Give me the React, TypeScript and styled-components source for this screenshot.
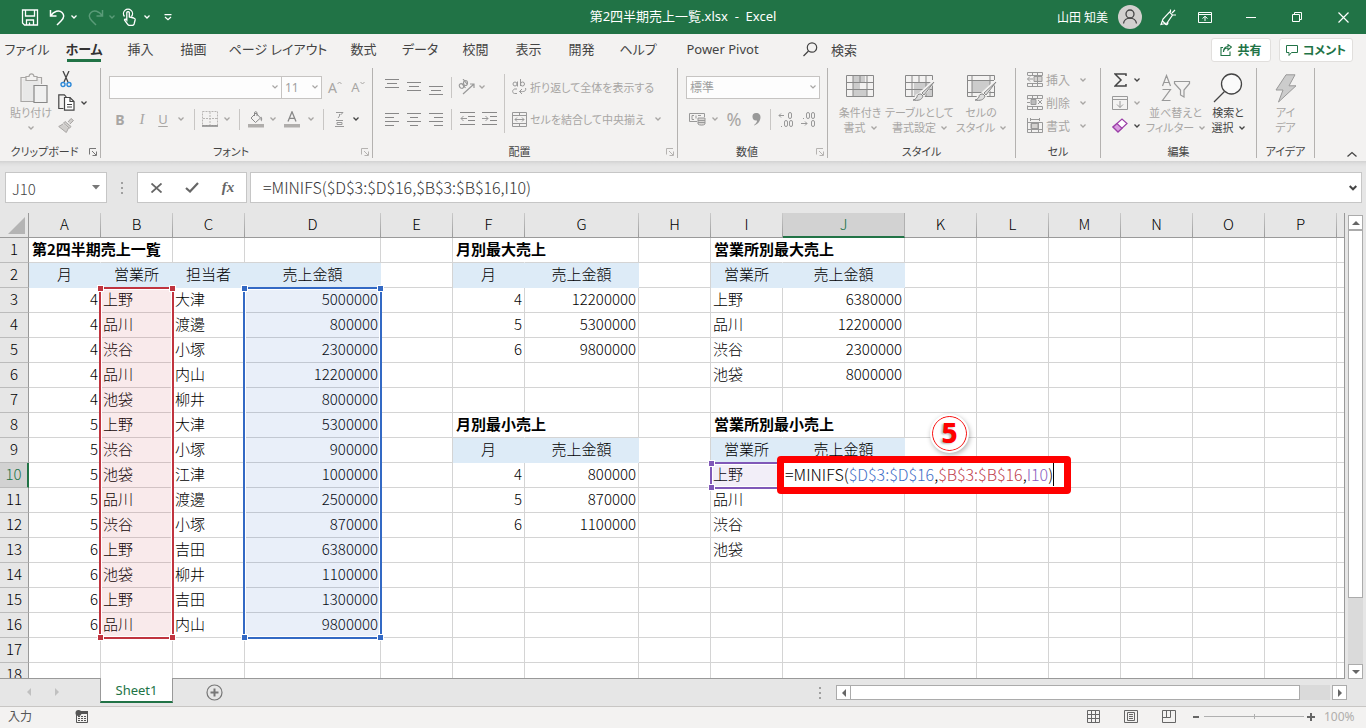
import React, { useState } from 'react';
import styled, { createGlobalStyle, css } from 'styled-components';

const UI = `'Noto Sans', 'Noto Sans CJK JP', sans-serif`;
const SHEET = `'Noto Sans CJK JP', sans-serif`;
const GREEN = '#217346';

const Global = createGlobalStyle`
  * { box-sizing: border-box; }
  body { margin: 0; background: #e6e6e6; font-family: ${UI}; font-size: 12px; color: #444; overflow: hidden; }
  button, input, select { font: inherit; color: inherit; margin: 0; }
  button { border: 0; padding: 0; background: none; font-feature-settings: 'palt'; }
`;

const Window = styled.div`
  display: flex;
  flex-direction: column;
  height: 100vh;
  font-feature-settings: 'palt';
`;

/* ---------- title bar ---------- */
const TitleBar = styled.header`
  display: grid;
  grid-template-columns: 1fr auto 1fr;
  align-items: center;
  flex: none;
  height: 34px;
  background: ${GREEN};
  color: #fff;
`;
const Quick = styled.div`
  display: flex;
  align-items: center;
  padding-left: 17px;
`;
const QuickPair = styled.div`
  display: flex;
  align-items: center;
  margin-right: 6px;
`;
const DocTitle = styled.div`
  font-size: 13px;
  line-height: 16px;
  padding-bottom: 2px;
  white-space: pre;
`;
const WindowTools = styled.div`
  display: flex;
  align-items: center;
  justify-content: flex-end;
`;
const UserName = styled.span`
  margin-right: 10px;
`;
const Account = styled.button`
  margin-right: 12px;
`;

/* ---------- generic controls ---------- */
const IconButton = styled.button<{ $w?: number; $h?: number; $c?: string }>`
  display: flex;
  align-items: center;
  justify-content: center;
  flex: none;
  width: ${p => p.$w ?? 22}px;
  height: ${p => p.$h ?? 24}px;
  color: ${p => p.$c ?? 'inherit'};
`;
const Svg = styled.svg.attrs(p => ({ fill: 'none', stroke: p.stroke ?? 'currentColor' }))`
  display: block;
  flex: none;
`;

const Chevron = () => (
  <Svg width="6" height="4" viewBox="0 0 6 4" strokeWidth="1.3">
    <path d="M.5.5 3 3 5.5.5" />
  </Svg>
);
const DropButton = ({ label, w, h, c }: { label: string; w: number; h?: number; c?: string }) => (
  <IconButton $w={w} $h={h} $c={c} aria-label={label}><Chevron /></IconButton>
);

/* ---------- tabs ---------- */
const TabRow = styled.nav`
  display: flex;
  align-items: center;
  flex: none;
  height: 32px;
  padding-right: 13px;
  background: #f3f2f1;
`;
const Tab = styled.button<{ $w: number; $active?: boolean }>`
  flex: none;
  width: ${p => p.$w}px;
  height: 32px;
  padding-bottom: 3px;
  font-size: 13px;
  white-space: nowrap;
  ${p => p.$active && css`
    font-weight: 700;
    color: #333;
    background: linear-gradient(${GREEN}, ${GREEN}) center 25px / 34px 3px no-repeat;
  `}
`;
const SearchButton = styled.button`
  display: flex;
  align-items: center;
  gap: 13px;
  margin-left: 26px;
  padding-bottom: 2px;
  font-size: 13px;
`;
const ShareArea = styled.div`
  display: flex;
  gap: 8px;
  margin-left: auto;
`;
const ShareButton = styled.button<{ $w: number }>`
  display: flex;
  align-items: center;
  justify-content: center;
  gap: 5px;
  width: ${p => p.$w}px;
  height: 24px;
  border: 1px solid #e1dfdd;
  border-radius: 3px;
  background: #fff;
  color: ${GREEN};
  font-size: 12px;
  font-weight: 700;
`;

/* ---------- ribbon ---------- */
const Ribbon = styled.section`
  display: flex;
  flex: none;
  height: 95px;
  padding-top: 2px;
  background: #f3f2f1;
`;
const Group = styled.section<{ $w: number }>`
  display: flex;
  flex-direction: column;
  flex: none;
  width: ${p => p.$w}px;
  height: 90px;
  border-right: 1px solid #b4b2b0;
  color: #a8a6a4;
`;
const GroupBody = styled.div<{ $pl?: number }>`
  display: flex;
  flex: 1;
  padding-left: ${p => p.$pl ?? 0}px;
`;
const GroupFoot = styled.footer`
  display: flex;
  align-items: center;
  height: 12px;
  color: #444;
  font-size: 11px;
  line-height: 14px;
  white-space: nowrap;
`;
const GroupName = styled.span`
  flex: 1;
  text-align: center;
`;
const LauncherButton = styled.button`
  margin-right: 3px;
`;
const Rows = styled.div`
  display: flex;
  flex-direction: column;
  gap: 8px;
  padding-top: 7px;
`;
const Row = styled.div`
  display: flex;
  align-items: center;
  height: 24px;
`;
const Tight = styled(Row)`
  height: 23px;
`;
const Split = styled.i<{ $m?: number }>`
  flex: none;
  width: 1px;
  height: 21px;
  margin: 0 ${p => p.$m ?? 5}px;
  background: #c8c6c4;
`;
const TallSplit = styled.i`
  flex: none;
  width: 1px;
  height: 59px;
  margin: 6px 7px 0 4px;
  background: #c8c6c4;
`;
const Combo = styled.select<{ $w: number }>`
  appearance: none;
  flex: none;
  width: ${p => p.$w}px;
  height: 23px;
  padding: 0 3px;
  border: 1px solid #c6c4c2;
  border-radius: 0;
  background: #fdfdfd url("data:image/svg+xml,%3Csvg xmlns='http://www.w3.org/2000/svg' width='6' height='4' fill='none' stroke='%23a8a6a4' stroke-width='1.2'%3E%3Cpath d='M.5.5 3 3 5.5.5'/%3E%3C/svg%3E") no-repeat right 3px center;
  color: #a0a0a0;
  font-size: 12px;
  & + & { margin-left: -1px; }
`;
const Glyph = styled.span<{ $size: number; $b?: boolean; $i?: boolean; $u?: boolean }>`
  font-size: ${p => p.$size}px;
  font-weight: ${p => (p.$b ? 700 : 400)};
  font-style: ${p => (p.$i ? 'italic' : 'normal')};
  text-decoration: ${p => (p.$u ? 'underline' : 'none')};
  text-underline-offset: 2px;
`;
const SerifItalic = styled(Glyph)`
  font-family: 'Liberation Serif', serif;
`;
const LabelButton = styled.button<{ $size?: number }>`
  display: flex;
  align-items: center;
  gap: 3px;
  height: 24px;
  font-size: ${p => p.$size ?? 12}px;
  white-space: nowrap;
  & > svg:nth-child(2) { margin-left: 7px; }
`;
const BigButton = styled.button<{ $w: number; $dark?: boolean }>`
  display: flex;
  flex-direction: column;
  align-items: center;
  justify-content: flex-start;
  flex: none;
  width: ${p => p.$w}px;
  padding-top: 3px;
  color: ${p => (p.$dark ? '#444' : '#a8a6a4')};
  font-size: 11px;
  line-height: 15px;
  white-space: nowrap;
`;
const BigIcon = styled.span`
  display: flex;
  align-items: center;
  justify-content: center;
  height: 34px;
`;
const BigLine = styled.span`
  display: flex;
  align-items: center;
  gap: 5px;
  height: 15px;
`;
const Collapse = styled.button`
  align-self: flex-end;
  margin: 0 9px 4px auto;
`;

const Launcher = ({ dim }: { dim?: boolean }) => (
  <LauncherButton aria-label="詳細設定">
    <Svg width="8" height="8" viewBox="0 0 8 8" stroke={dim ? '#b5b3b1' : '#777'}>
      <path d="M.5 6.5V.5H7M3 3l4 4M7.5 3.5v4h-4" />
    </Svg>
  </LauncherButton>
);

/* ---------- formula bar ---------- */
const FormulaBar = styled.section`
  display: flex;
  flex: none;
  height: 52px;
  padding: 11px 4px 10px 5px;
  background: linear-gradient(#d2d2d2, #e0e0e0 3px, #e6e6e6 6px);
`;
const NameBox = styled.div`
  display: flex;
  align-items: center;
  width: 102px;
  padding: 0 6px;
  border: 1px solid #c6c6c6;
  background: #fff;
  input { width: 80px; height: 24px; border: 0; padding: 2px 0 0; outline: 0; background: none; font-family: ${SHEET}; font-size: 15px; font-weight: 300; color: #444; }
`;
const Dots = styled.i`
  flex: none;
  width: 2px;
  height: 12px;
  background: repeating-linear-gradient(#a0a0a0 0 2px, transparent 2px 5px);
`;
const NameDots = styled(Dots)`
  align-self: center;
  margin: 0 14px;
`;
const ScrollDots = styled(Dots)`
  margin-right: 15px;
`;
const EditButtons = styled.div`
  display: flex;
  align-items: center;
  justify-content: space-around;
  width: 110px;
  border: 1px solid #c6c6c6;
  background: #fff;
  color: #666;
`;
const FormulaField = styled.div`
  display: flex;
  align-items: center;
  flex: 1;
  margin-left: 3px;
  padding: 0 4px 0 12px;
  border: 1px solid #c6c6c6;
  background: #fff;
  input { flex: 1; border: 0; padding: 0 0 2px; height: 26px; outline: 0; background: none; font-family: ${SHEET}; font-size: 16px; font-weight: 300; color: #333; }
`;

/* ---------- sheet ---------- */
const SheetArea = styled.main`
  display: flex;
  flex: 1;
  min-height: 0;
`;
const GridBox = styled.div`
  position: relative;
  flex: 1;
  min-width: 0;
  overflow: hidden;
  border-right: 1px solid #999;
  border-bottom: 1px solid #999;
  background: #fff;
`;
const Table = styled.table`
  width: 100%;
  table-layout: fixed;
  border-collapse: separate;
  border-spacing: 0;
  background: #fff;
  color: #000;
  font-family: ${SHEET};
  font-size: 15px;
  font-weight: 300;
  font-feature-settings: normal;
`;
const ColHead = styled.th<{ $on?: boolean }>`
  height: 25px;
  padding: 0 0 2px;
  border-right: 1px solid;
  border-bottom: 1px solid #999;
  border-image: linear-gradient(#ccc, #999) 1;
  background: #e6e6e6;
  font-weight: 300;
  line-height: 22px;
  &:last-child { border-right: 0; }
  ${p => p.$on && css`
    border-image: none;
    border-right-color: #b0b0b0;
    border-bottom: 2px solid ${GREEN};
    background: #d2d2d2;
    color: ${GREEN};
    line-height: 21px;
  `}
`;
const Corner = styled.th`
  padding: 0 3px 3px 0;
  border-right: 1px solid #999;
  border-bottom: 1px solid #999;
  background: #e6e6e6;
  vertical-align: bottom;
  svg { margin-left: auto; }
`;
const RowHead = styled.th<{ $on?: boolean }>`
  height: 25px;
  padding: 0 0 2px;
  border-right: 1px solid #999;
  border-bottom: 1px solid #bbb;
  background: #e6e6e6;
  font-weight: 300;
  line-height: 22px;
  ${p => p.$on && css`
    border-right: 2px solid ${GREEN};
    background: #d2d2d2;
    color: ${GREEN};
  `}
`;
type CellKind = 'text' | 'num' | 'head' | 'title' | 'empty';
const Cell = styled.td<{ $kind: CellKind; $open?: boolean }>`
  height: 25px;
  padding: 0 2px 2px;
  border-right: 1px solid ${p => (p.$open ? 'transparent' : '#d4d4d4')};
  border-bottom: 1px solid #d4d4d4;
  line-height: 22px;
  white-space: nowrap;
  overflow: visible;
  &:last-child { border-right: 0; }
  ${p => p.$kind === 'num' && css`text-align: right;`}
  ${p => p.$kind === 'title' && css`font-weight: 700; padding-left: 3px;`}
  ${p => p.$kind === 'head' && css`
    text-align: center;
    background: #ddebf7;
    border-color: #ddebf7;
  `}
`;
const Range = styled.div<{ $x: number; $y: number; $w: number; $h: number; $color: string; $fill: string }>`
  position: absolute;
  left: ${p => p.$x}px;
  top: ${p => p.$y}px;
  width: ${p => p.$w}px;
  height: ${p => p.$h}px;
  border: 2px solid ${p => p.$color};
  background: ${p => p.$fill};
  box-shadow: inset 0 0 0 1px #fff;
  i {
    position: absolute;
    width: 7px;
    height: 7px;
    border: 1px solid #fff;
    background: ${p => p.$color};
  }
  i:nth-child(1) { left: -4px; top: -4px; }
  i:nth-child(2) { right: -4px; top: -4px; }
  i:nth-child(3) { left: -4px; bottom: -4px; }
  i:nth-child(4) { right: -4px; bottom: -4px; }
`;
const Editor = styled.div`
  position: absolute;
  left: 777px;
  top: 243px;
  height: 38px;
  width: 294px;
  padding-left: 1px;
  border: 7px solid #f00;
  border-radius: 4px;
  background: #fff;
  color: #000;
  font-family: ${SHEET};
  font-size: 16px;
  font-weight: 300;
  font-feature-settings: normal;
  line-height: 22px;
  white-space: nowrap;
`;
const Ref = styled.span<{ $c: string }>`
  color: ${p => p.$c};
`;
const Caret = styled.i`
  display: inline-block;
  width: 1px;
  height: 23px;
  background: #000;
  vertical-align: top;
`;
const Step = styled.div`
  position: absolute;
  left: 932px;
  top: 203px;
  width: 35px;
  height: 35px;
  border: 1px solid #f00;
  border-radius: 50%;
  outline: 2px solid #fff;
  background: #fff;
  box-shadow: 1px 2px 5px 2px rgba(0, 0, 0, 0.3);
  color: #f00;
  font-size: 28px;
  font-weight: 800;
  line-height: 31px;
  text-align: center;
  text-shadow: -2px 1px 2px #bbb;
`;

/* ---------- scroll bars ---------- */
const VScroll = styled.div`
  display: flex;
  flex-direction: column;
  flex: none;
  width: 15px;
  margin: 2px 3px 0 3px;
  background: #dadada;
`;
const ScrollButton = styled.button`
  display: flex;
  align-items: center;
  justify-content: center;
  flex: none;
  width: 15px;
  height: 15px;
  border: 1px solid #ababab;
  background: #fff;
  color: #666;
`;
const VThumb = styled.div`
  flex: 368 0 0;
  border: 1px solid #ababab;
  background: #fff;
`;
const VRest = styled.div`
  flex: 66 0 0;
`;
const TabBar = styled.footer`
  display: flex;
  flex: none;
  height: 28px;
  padding-right: 19px;
  border-bottom: 1px solid #c8c6c4;
  background: #e6e6e6;
`;
const SheetNav = styled.div`
  display: flex;
  align-items: center;
  width: 100px;
  height: 25px;
  padding-left: 25px;
  gap: 20px;
  color: #c0c0c0;
`;
const SheetTab = styled.button`
  position: relative;
  width: 73px;
  height: 25px;
  margin-top: -1px;
  border: 1px solid #999;
  border-top: 0;
  border-bottom: 2px solid ${GREEN};
  background: #fff;
  color: ${GREEN};
  font-size: 13px;
`;
const AddSheet = styled.button`
  margin: 0 0 0 33px;
  color: #777;
`;
const HScroll = styled.div`
  display: flex;
  align-items: center;
  width: 528px;
  margin-left: auto;
  height: 27px;
`;
const HTrack = styled.div`
  display: flex;
  flex: 1;
  height: 15px;
  margin: 0 2px 0 -1px;
  background: #dadada;
`;
const HThumb = styled.div`
  flex: 449 0 0;
  border: 1px solid #ababab;
  background: #fff;
`;
const HRest = styled.div`
  flex: 30 0 0;
`;
const StatusBar = styled.footer`
  display: flex;
  align-items: center;
  flex: none;
  height: 21px;
  padding: 0 8px 2px;
  background: #f3f2f1;
  color: #555;
  font-size: 12px;
  line-height: 16px;
`;
const MacroButton = styled.button`
  margin-left: 43px;
  color: #555;
`;
const ViewTools = styled.div`
  display: flex;
  align-items: center;
  margin-left: auto;
  color: #666;
`;
const ZoomRange = styled.input`
  appearance: none;
  width: 100px;
  height: 11px;
  margin: 0 3px 0 0;
  background: linear-gradient(#b0b0b0, #b0b0b0) center / 100% 1px no-repeat,
    linear-gradient(#b0b0b0, #b0b0b0) center / 1px 5px no-repeat;
  &::-webkit-slider-thumb { appearance: none; width: 0; }
`;
const ZoomText = styled.span`
  width: 34px;
  margin-left: 9px;
  color: #b0aeac;
`;

/* ---------- icons ---------- */
const I = {
  save: <Svg width="18" height="17" viewBox="0 0 18 17" strokeWidth="1.3"><path d="M1.5 1h15v15h-13l-2-2zM4.500 1v6h9V1M5.500 16v-5h7v5M8.500 13.500V16" /></Svg>,
  undo: <Svg width="16" height="17" viewBox="0 0 16 17" strokeWidth="1.5"><path d="M1.500 1v6h6M1.500 7C5 2 10 .5 13 3.500s1.500 6-1 8.500l-4 4" /></Svg>,
  redo: <Svg width="16" height="17" viewBox="0 0 16 17" strokeWidth="1.5"><path d="M14.500 1v6h-6M14.500 7C11 2 6 .5 3 3.500s-1.500 6 1 8.500l4 4" /></Svg>,
  touch: <Svg width="15" height="18" viewBox="0 0 15 18" strokeWidth="1.3"><path d="M2.500 8.500a4.500 4.500 0 1 1 7 0M4.800 12V4.500a1.300 1.300 0 0 1 2.500 0V9l4.500 1c1 .3 1.500 1 1.300 2l-1 4c-.3 1-1 1.400-2 1.400H7.500c-1 0-1.500-.4-2-1.200L2.500 12c0-1.200 1.500-1 2.300 0z" /></Svg>,
  custom: <Svg width="8" height="7" viewBox="0 0 8 7" strokeWidth="1.200"><path d="M.5.6h7M1 3l3 2.700L7 3" /></Svg>,
  person: <Svg width="24" height="24" viewBox="0 0 24 24" stroke="#444" strokeWidth="1.300"><circle cx="12" cy="12" r="12" fill="#d2d0ce" stroke="none" /><circle cx="12" cy="9" r="4" /><path d="M5.500 18.500c.7-7.300 12.300-7.300 13 0" /></Svg>,
  pen: <Svg width="17" height="17" viewBox="0 0 17 17" strokeWidth="1.200"><path d="M1 15.500 3 10l6.500-7 3 3L7 14zM2.500 12l2.500 2.500M10.500 3V.5M12 4l3-3M13 6h3M5 15c1 1 3 1 3-1.500" /></Svg>,
  ribbon: <Svg width="14" height="11" viewBox="0 0 14 11"><path d="M.5.5h13v10H.5zM.5 2.500h13M7 9V4.500M4.500 6.500 7 4.300l2.500 2.200" /></Svg>,
  restore: <Svg width="11" height="11" viewBox="0 0 11 11"><path d="M.5 2.500h7v7h-7zM2.500 2.500v-2h7v7h-2" /></Svg>,
  search: <Svg width="15" height="15" viewBox="0 0 15 15" strokeWidth="1.200"><circle cx="9" cy="5.500" r="4.700" /><path d="m5.500 9-5 5" /></Svg>,
  share: <Svg width="12" height="12" viewBox="0 0 12 12" strokeWidth="1.100"><path d="M3 3.500H1v8h9v-4M3.500 8c.2-3 2-4 4.500-4V6l3.500-3L8 .6v1.900C5 2.500 3.300 5 3.500 8z" /></Svg>,
  comment: <Svg width="12" height="11" viewBox="0 0 12 11"><path d="M.5.5h11v7h-6l-2.500 3v-3H.5z" /></Svg>,
  paste: <Svg width="34" height="31" viewBox="-6 0 34 31" strokeWidth="1.200"><path d="M6 4.500H1v24h13M16 4.500h5.500V11" /><path d="M2.500 6h17v22h-17z" fill="#e8e8e8" stroke="none" /><path d="M6 7.500v-4h3c.5-3.500 4.500-3.500 5 0h3v4z" fill="#f3f2f1" /><path d="M14 12.500h13v17H14z" fill="#f0f0f0" stroke="#888" /></Svg>,
  cut: <Svg width="12" height="17" viewBox="0 0 12 17"><path d="m3 0 5 11M9 0 4 11" stroke="#444" strokeWidth="1.300" /><circle cx="3" cy="13.500" r="2" stroke="#2b88d8" strokeWidth="1.400" /><circle cx="9" cy="13.500" r="2" stroke="#2b88d8" strokeWidth="1.400" /></Svg>,
  copy: <Svg width="17" height="17" viewBox="0 0 17 17" stroke="#444" strokeWidth="1.200"><path d="M5.500 14.500H.8V.8h5.500l2 2" /><path d="M6.500 3.500H12l4 4v8.700H6.500z" fill="#fff" /><path d="M12 3.500v4h4M9 10.500h5M9 13h5" /></Svg>,
  brush: <Svg width="16" height="15" viewBox="0 0 16 15"><path d="m10 4 3-3.500 2.500 2L12 6M7 3.500l6 5-1.500 1.700-6-5zM5 6 .7 8.500l7.600 6L10.500 10" fill="#d0cecc" /></Svg>,
  borders: <Svg width="16" height="16" viewBox="0 0 16 16"><path d="M.5.5h15v14H.5zM8 1v13M1 7.500h14" strokeDasharray="2 1" stroke="#b8b6b4" /><path d="M0 15h16" stroke="#888" strokeWidth="1.500" /></Svg>,
  fill: <Svg width="16" height="17" viewBox="0 0 16 17"><path d="m3 7 5-5 4.500 5-5 4.500zM6.500 5V1.800C6.500.3 9 .3 9 2v3" stroke="#888" /><path d="M13 5.500c1.500 1 1.500 3 .5 5-1-1-1.500-3-.5-5z" fill="#999" stroke="none" /><path d="M0 13h16v3.500H0z" fill="#b0aeac" stroke="none" /></Svg>,
  fontColor: <Svg width="16" height="17" viewBox="0 0 16 17"><path d="M4 10.500 8 .8l4 9.700M5.300 7.300h5.400" stroke="#888" strokeWidth="1.300" /><path d="M0 13h16v3.500H0z" fill="#b0aeac" stroke="none" /></Svg>,
  ruby: <Svg width="9" height="17" viewBox="0 0 9 17" stroke="#999"><path d="M1 1.500h7L5.500 4M4.500 3v2L3 7M1 9.500h7M2 11.500h5v2H2zM0 15.500h9" /></Svg>,
  orient: <Svg width="18" height="16" viewBox="0 0 18 16" stroke="#999" strokeWidth="1.200"><ellipse cx="3.500" cy="7" rx="2" ry="2.500" transform="rotate(-40 3.500 7)" /><ellipse cx="7.500" cy="4" rx="2" ry="2.500" /><path d="m3.500 4 4 5M5 0l4 5M5 15 16 5M12 5h4v4" /></Svg>,
  wrap: <Svg width="15" height="16" viewBox="0 0 15 16" stroke="#999"><circle cx="3" cy="5" r="2" /><path d="M5.500 2.500V7.500M8.500 0v7" /><circle cx="10.500" cy="5" r="2" /><path d="M5 10H2.500C0 11 0 14 2.500 14.500H5M13.500 9c1 3-1 4-6 3.500M10 10l-2.500 2.500L10 15" /></Svg>,
  merge: <Svg width="15" height="15" viewBox="0 0 15 15" stroke="#999"><path d="M.5.5h14v14H.5zM.5 3.500h14M.5 11.500h14M7.500.5v3M7.500 11.500v3M3 7.500h9M5 5.500l-2 2 2 2M10 5.500l2 2-2 2" /></Svg>,
  money: <Svg width="17" height="14" viewBox="0 0 17 14" stroke="#999"><path d="M8 9.500H.5v-8h15V5M5 3.500H3v4h2M7 3.500v3M9 3.500h3" /><path d="M9 6v6c1 1.500 6 1.500 7 0V6zM9 8.500h7M9 10.500h7" fill="#d8d6d4" /></Svg>,
  fx: <SerifItalic $size={15} $b $i>fx</SerifItalic>,
};

const Lines = ({ rows, y = 0 }: { rows: [number, number][]; y?: number }) => (
  <Svg width="14" height="17" viewBox="0 0 14 17" stroke="#888">
    {rows.map(([a, b], i) => <path key={i} d={`M${a} ${y + 0.5 + i * 4}H${b}`} />)}
  </Svg>
);
const Indent = ({ out }: { out?: boolean }) => (
  <Svg width="15" height="14" viewBox="0 0 15 14" stroke="#888">
    <path d="M0 .5h15M8 4.500h7M8 8.500h7M0 12.500h15" />
    <path d={out ? 'M7 6.500H1M3.500 4 1 6.500 3.500 9' : 'M0 6.500h6M3.500 4 6 6.500 3.500 9'} stroke="#999" />
  </Svg>
);
const Decimal = ({ up }: { up?: boolean }) => (
  <Svg width="17" height="15" viewBox="0 0 17 15" stroke="#999">
    {up ? <path d="M6 3.500H1M3 1.500l-2 2 2 2" /> : <path d="M1 11.500h6M5 9.500l2 2-2 2" />}
    {(up ? [[10, 0], [6, 8], [11, 8]] : [[6, 0], [11, 0], [11, 8]]).map(([x, y], i) => (
      <rect key={i} x={x + 0.5} y={y + 0.5} width="3" height="6" rx="1.500" />
    ))}
    <path d={up ? 'M3 14.500h1' : 'M3 6.500h1'} />
  </Svg>
);
const StyleIcon = ({ kind }: { kind: 'cond' | 'table' | 'cell' }) => (
  <Svg width="31" height="28" viewBox="0 0 31 28" stroke="#888">
    {kind === 'cond' && <path d="M8 2h12v6H8zM8 9h7v6H8zM8 16h14v7H8z" fill="#ccc" stroke="none" />}
    {kind === 'table' && <path d="M10 9h19v14H10z" fill="#ccc" stroke="none" />}
    {kind === 'cell' && <path d="M6 7h18v11H6z" fill="#ccc" stroke="none" />}
    <path d="M1.500 1.500h27v21h-27z" />
    <path d={kind === 'cell' ? 'M6 1v21M1 6.500h27M1 18.500h27M24 1v21' : 'M1 8.500h27M1 15.500h27M8 1v21M15 1v7M22 1v21'} />
    {kind !== 'cond' && (
      <>
        <path d="M30 7 18 18l-3 3c-2 0-3 1-3 3-1 2-3 2-4 2 5 2 10 1 11-3l1-3z" fill="#f3f2f1" stroke="#f3f2f1" strokeWidth="3" />
        <path d="M30 8 20 21l-2-2zM17 20c-3 0-4 1-4 3-1 2-3 3-4 3 5 1 9 0 10-4z" fill="#ddd" />
      </>
    )}
  </Svg>
);
const CellIcon = ({ kind }: { kind: number }) => (
  <Svg width="16" height="15" viewBox="0 0 16 15" stroke="#999">
    {kind === 0 && <><path d="M7 4.500h8v5H7z" fill="#d4d2d0" /><path d="M.5 3V.5h15v3H.5M5.500.5v3M10.500.5v14M.5 11v3.500h15v-3H.5M5.500 11v3M6 7H.5M3 4.500.5 7 3 9.500" /></>}
    {kind === 1 && <><path d="M4 4.500h5v5H4z" fill="#bbb" /><path d="M.5 4.500v-4h15v3H.5M5.500.5v3M10.500.5v3M.5 10.500v4h15v-3H.5M5.500 11v3M10.500 11v3M0 7.500h3M11 5l4 4M15 5l-4 4" /></>}
    {kind === 2 && <><path d="M4 5.500h7v5H4z" fill="#d4d2d0" /><path d="M.5 0v14.500h15V4.500H.5M4.500 4v10M11.500 4v10M.5 11.500h15M3.500 0v3M12.500 0v3M3.500 1.500h9" /></>}
  </Svg>
);
const Tri = ({ dir }: { dir: 'up' | 'down' | 'left' | 'right' }) => {
  const d = { up: 'M0 6 4 2l4 4z', down: 'M0 2h8L4 6z', left: 'M6 0v8L2 4z', right: 'M2 0v8l4-4z' }[dir];
  return <Svg width="8" height="8" viewBox="0 0 8 8" stroke="none"><path d={d} fill="currentColor" /></Svg>;
};

/* ---------- data ---------- */
const TABS: [string, number][] = [
  ['ファイル', 54], ['ホーム', 60], ['挿入', 53], ['描画', 53], ['ページ レイアウト', 116], ['数式', 55],
  ['データ', 58], ['校閲', 53], ['表示', 53], ['開発', 53], ['ヘルプ', 60], ['Power Pivot', 109],
];
const COLS: [string, number][] = [
  ['A', 72], ['B', 72], ['C', 72], ['D', 136], ['E', 72], ['F', 72], ['G', 114], ['H', 72], ['I', 72],
  ['J', 122], ['K', 72], ['L', 72], ['M', 72], ['N', 72], ['O', 72], ['P', 72],
];
const SALES: [number, string, string, number][] = [
  [4, '上野', '大津', 5000000], [4, '品川', '渡邊', 800000], [4, '渋谷', '小塚', 2300000], [4, '品川', '内山', 12200000],
  [4, '池袋', '柳井', 8000000], [5, '上野', '大津', 5300000], [5, '渋谷', '小塚', 900000], [5, '池袋', '江津', 1000000],
  [5, '品川', '渡邊', 2500000], [5, '渋谷', '小塚', 870000], [6, '上野', '吉田', 6380000], [6, '池袋', '柳井', 1100000],
  [6, '上野', '吉田', 1300000], [6, '品川', '内山', 9800000],
];
const cells: Record<string, { v: string | number; k: CellKind }> = {};
const put = (ref: string, v: string | number, k?: CellKind) => {
  cells[ref] = { v, k: k ?? (typeof v === 'number' ? 'num' : 'text') };
};
put('A1', '第2四半期売上一覧', 'title');
['月', '営業所', '担当者', '売上金額'].forEach((t, i) => put('ABCD'[i] + 2, t, 'head'));
SALES.forEach((row, r) => row.forEach((v, i) => put('ABCD'[i] + (r + 3), v)));
put('F1', '月別最大売上', 'title');
put('F8', '月別最小売上', 'title');
put('I1', '営業所別最大売上', 'title');
put('I8', '営業所別最小売上', 'title');
[2, 9].forEach(r => {
  put('F' + r, '月', 'head');
  put('G' + r, '売上金額', 'head');
  put('I' + r, '営業所', 'head');
  put('J' + r, '売上金額', 'head');
});
[4, 5, 6].forEach((m, i) => {
  put('F' + (3 + i), m);
  put('G' + (3 + i), [12200000, 5300000, 9800000][i]);
  put('F' + (10 + i), m);
  put('G' + (10 + i), [800000, 870000, 1100000][i]);
});
['上野', '品川', '渋谷', '池袋'].forEach((n, i) => {
  put('I' + (3 + i), n);
  put('J' + (3 + i), [6380000, 12200000, 2300000, 8000000][i]);
  put('I' + (10 + i), n);
});
const OPEN = new Set(['A1', 'F1', 'F8', 'I1', 'I8']);
const ROWS = Array.from({ length: 18 }, (_, i) => i + 1);

const Handles = () => <><i /><i /><i /><i /></>;

export default function App() {
  const [formula, setFormula] = useState('=MINIFS($D$3:$D$16,$B$3:$B$16,I10)');
  const [zoom, setZoom] = useState(50);
  return (
    <Window>
      <Global />
      <TitleBar>
        <Quick>
          <IconButton $w={26} aria-label="保存">{I.save}</IconButton>
          <QuickPair>
            <IconButton $w={28} aria-label="元に戻す">{I.undo}</IconButton>
            <DropButton w={6} label="元に戻す一覧" />
          </QuickPair>
          <IconButton $w={26} $c="#5a9b78" aria-label="やり直し">{I.redo}</IconButton>
          <DropButton w={6} c="#5a9b78" label="やり直し一覧" />
          <IconButton $w={28} aria-label="タッチ/マウス">{I.touch}</IconButton>
          <DropButton w={8} label="モード" />
          <IconButton $w={34} aria-label="カスタマイズ">{I.custom}</IconButton>
        </Quick>
        <DocTitle>第2四半期売上一覧.xlsx  -  Excel</DocTitle>
        <WindowTools>
          <UserName>山田 知美</UserName>
          <Account aria-label="アカウント">{I.person}</Account>
          <IconButton $w={28} aria-label="ペン">{I.pen}</IconButton>
          <IconButton $w={46} aria-label="リボンの表示">{I.ribbon}</IconButton>
          <IconButton $w={46} aria-label="最小化"><Svg width="10" height="1" viewBox="0 0 10 1"><path d="M0 .5h10" /></Svg></IconButton>
          <IconButton $w={46} aria-label="元のサイズ">{I.restore}</IconButton>
          <IconButton $w={46} aria-label="閉じる"><Svg width="11" height="11" viewBox="0 0 11 11" strokeWidth="1.200"><path d="m.5.5 10 10M10.500.5l-10 10" /></Svg></IconButton>
        </WindowTools>
      </TitleBar>

      <TabRow>
        {TABS.map(([t, w]) => <Tab key={t} $w={w} $active={t === 'ホーム'}>{t}</Tab>)}
        <SearchButton>{I.search}検索</SearchButton>
        <ShareArea>
          <ShareButton $w={60}>{I.share}共有</ShareButton>
          <ShareButton $w={74}>{I.comment}コメント</ShareButton>
        </ShareArea>
      </TabRow>

      <Ribbon>
        <Group $w={101}>
          <GroupBody $pl={8}>
            <BigButton $w={46}><BigIcon>{I.paste}</BigIcon><BigLine>貼り付け</BigLine><BigLine><Chevron /></BigLine></BigButton>
            <div>
              <Tight><IconButton $w={24} aria-label="切り取り">{I.cut}</IconButton></Tight>
              <Tight><IconButton $w={24} aria-label="コピー">{I.copy}</IconButton><DropButton w={12} c="#444" label="コピー一覧" /></Tight>
              <Tight><IconButton $w={24} aria-label="書式のコピー">{I.brush}</IconButton></Tight>
            </div>
          </GroupBody>
          <GroupFoot><GroupName>クリップボード</GroupName><Launcher /></GroupFoot>
        </Group>

        <Group $w={272}>
          <GroupBody $pl={8}>
            <Rows>
              <Row>
                <Combo $w={173} aria-label="フォント名"><option /></Combo>
                <Combo $w={41} aria-label="サイズ"><option>11</option></Combo>
                <IconButton $w={26} aria-label="拡大"><Glyph $size={14}>A</Glyph><Svg width="5" height="12" viewBox="0 0 5 12"><path d="M.5 3 2.500 1l2 2" /></Svg></IconButton>
                <IconButton $w={20} aria-label="縮小"><Glyph $size={13}>A</Glyph><Svg width="5" height="12" viewBox="0 0 5 12"><path d="m.5 1 2 2 2-2" /></Svg></IconButton>
              </Row>
              <Row>
                <IconButton aria-label="太字"><Glyph $size={14} $b>B</Glyph></IconButton>
                <IconButton aria-label="斜体"><SerifItalic $size={15} $i>I</SerifItalic></IconButton>
                <IconButton $w={20} aria-label="下線"><Glyph $size={13} $u>U</Glyph></IconButton>
                <DropButton w={16} label="下線一覧" /><Split />
                <IconButton $w={20} aria-label="罫線">{I.borders}</IconButton>
                <DropButton w={14} label="罫線一覧" /><Split />
                <IconButton aria-label="塗りつぶし">{I.fill}</IconButton>
                <DropButton w={12} label="塗りつぶし一覧" />
                <IconButton $w={26} aria-label="文字色">{I.fontColor}</IconButton>
                <DropButton w={12} label="文字色一覧" /><Split $m={6} />
                <IconButton $w={18} aria-label="ふりがな">{I.ruby}</IconButton>
                <DropButton w={16} c="#444" label="ふりがな一覧" />
              </Row>
            </Rows>
          </GroupBody>
          <GroupFoot><GroupName>フォント</GroupName><Launcher dim /></GroupFoot>
        </Group>

        <Group $w={305}>
          <GroupBody $pl={8}>
            <Rows>
              <Row>
                <IconButton aria-label="上揃え"><Lines rows={[[0, 14], [2, 12], [0, 14]]} /></IconButton>
                <IconButton aria-label="上下中央"><Lines y={3} rows={[[0, 14], [2, 12], [0, 14]]} /></IconButton>
                <IconButton aria-label="下揃え"><Lines y={7} rows={[[0, 14], [2, 12], [0, 14]]} /></IconButton>
                <Split $m={4} />
                <IconButton aria-label="方向">{I.orient}</IconButton>
                <DropButton w={8} label="方向一覧" />
              </Row>
              <Row>
                <IconButton aria-label="左揃え"><Lines y={2} rows={[[0, 14], [0, 9], [0, 14], [0, 9]]} /></IconButton>
                <IconButton aria-label="中央揃え"><Lines y={2} rows={[[0, 14], [3, 11], [0, 14], [3, 11]]} /></IconButton>
                <IconButton aria-label="右揃え"><Lines y={2} rows={[[0, 14], [5, 14], [0, 14], [5, 14]]} /></IconButton>
                <Split $m={4} />
                <IconButton aria-label="インデント減"><Indent out /></IconButton>
                <IconButton aria-label="インデント増"><Indent /></IconButton>
              </Row>
            </Rows>
            <TallSplit />
            <Rows>
              <LabelButton $size={11}>{I.wrap}折り返して全体を表示する</LabelButton>
              <LabelButton $size={11}>{I.merge}セルを結合して中央揃え<Chevron /></LabelButton>
            </Rows>
          </GroupBody>
          <GroupFoot><GroupName>配置</GroupName><Launcher dim /></GroupFoot>
        </Group>

        <Group $w={150}>
          <GroupBody $pl={8}>
            <Rows>
              <Row><Combo $w={134} aria-label="表示形式"><option>標準</option></Combo></Row>
              <Row>
                <IconButton aria-label="通貨">{I.money}</IconButton>
                <DropButton w={14} label="通貨一覧" />
                <IconButton $w={24} aria-label="パーセント"><Glyph $size={18}>%</Glyph></IconButton>
                <IconButton $w={20} aria-label="桁区切り">
                  <Svg width="9" height="13" viewBox="0 0 9 13"><path d="M4 0a4 4 0 0 1 4.500 4c0 4-2.500 7-6 8.500L2 12c2-1.500 3-3 3-4.500C2 8 .5 6 .5 4A3.700 3.700 0 0 1 4 0z" fill="#999" stroke="none" /></Svg>
                </IconButton>
                <Split $m={4} />
                <IconButton aria-label="小数点以下を増やす"><Decimal up /></IconButton>
                <IconButton aria-label="小数点以下を減らす"><Decimal /></IconButton>
              </Row>
            </Rows>
          </GroupBody>
          <GroupFoot><GroupName>数値</GroupName><Launcher dim /></GroupFoot>
        </Group>

        <Group $w={188}>
          <GroupBody $pl={4}>
            <BigButton $w={56}><BigIcon><StyleIcon kind="cond" /></BigIcon><BigLine>条件付き</BigLine><BigLine>書式<Chevron /></BigLine></BigButton>
            <BigButton $w={63}><BigIcon><StyleIcon kind="table" /></BigIcon><BigLine>テーブルとして</BigLine><BigLine>書式設定<Chevron /></BigLine></BigButton>
            <BigButton $w={60}><BigIcon><StyleIcon kind="cell" /></BigIcon><BigLine>セルの</BigLine><BigLine>スタイル<Chevron /></BigLine></BigButton>
          </GroupBody>
          <GroupFoot><GroupName>スタイル</GroupName></GroupFoot>
        </Group>

        <Group $w={85}>
          <GroupBody $pl={11}>
            <div>
              {['挿入', '削除', '書式'].map((t, i) => (
                <Tight key={t}><LabelButton><CellIcon kind={i} />{t}<Chevron /></LabelButton></Tight>
              ))}
            </div>
          </GroupBody>
          <GroupFoot><GroupName>セル</GroupName></GroupFoot>
        </Group>

        <Group $w={156}>
          <GroupBody $pl={8}>
            <div>
              <Tight>
                <IconButton $w={22} aria-label="合計"><Svg width="13" height="14" viewBox="0 0 13 14" stroke="#444" strokeWidth="1.500"><path d="M12 3V1H1l6 6-6 6h11v-2" /></Svg></IconButton>
                <DropButton w={12} c="#444" label="合計一覧" />
              </Tight>
              <Tight>
                <IconButton $w={22} aria-label="フィル"><Svg width="16" height="14" viewBox="0 0 16 14" stroke="#999"><path d="M.5.5h15v13H.5zM.5 3.500h15M8 5v6.500M5 8.500l3 3 3-3" /></Svg></IconButton>
                <DropButton w={12} label="フィル一覧" />
              </Tight>
              <Tight>
                <IconButton $w={22} aria-label="クリア"><Svg width="16" height="15" viewBox="0 0 16 15" stroke="#9b3fa8" strokeWidth="1.200"><path d="m1 9 9-8 5 4.500-9 8.500z" fill="#fff" /><path d="m1 9 4-3.500 5 4.800L6 14z" fill="#d99be0" /></Svg></IconButton>
                <DropButton w={12} c="#444" label="クリア一覧" />
              </Tight>
            </div>
            <BigButton $w={65}>
              <BigIcon>
                <Svg width="30" height="28" viewBox="0 0 30 28" stroke="#999" strokeWidth="1.200"><path d="m1.500 12 4-10.500L9.500 12M3 8.500h5M1.500 15.500h8L1.500 26.500h8M13.500 7.500h15v2L23 16v7l-3.500-2v-5l-6-6.500z" /></Svg>
              </BigIcon>
              <BigLine>並べ替えと</BigLine><BigLine>フィルター<Chevron /></BigLine>
            </BigButton>
            <BigButton $w={40} $dark>
              <BigIcon><Svg width="30" height="30" viewBox="0 0 30 30" stroke="#444" strokeWidth="1.300"><circle cx="18.500" cy="11" r="10" fill="#fafafa" /><path d="M11.500 18.500 1 29" /></Svg></BigIcon>
              <BigLine>検索と</BigLine><BigLine>選択<Chevron /></BigLine>
            </BigButton>
          </GroupBody>
          <GroupFoot><GroupName>編集</GroupName></GroupFoot>
        </Group>

        <Group $w={58}>
          <GroupBody>
            <BigButton $w={57}>
              <BigIcon><Svg width="22" height="29" viewBox="0 0 22 29"><path d="M11 .8h9l-6 11h7L3.500 28 8 16H1z" fill="#ccc" stroke="#999" /></Svg></BigIcon>
              <BigLine>アイ</BigLine><BigLine>デア</BigLine>
            </BigButton>
          </GroupBody>
          <GroupFoot><GroupName>アイデア</GroupName></GroupFoot>
        </Group>
        <Collapse aria-label="リボンを折りたたむ"><Svg width="10" height="6" viewBox="0 0 10 6" strokeWidth="1.300"><path d="m.5 5.500 4.500-4 4.500 4" /></Svg></Collapse>
      </Ribbon>

      <FormulaBar>
        <NameBox><input aria-label="名前ボックス" defaultValue="J10" /><Svg width="8" height="5" viewBox="0 0 8 5"><path d="M0 0h8L4 4.500z" fill="#777" stroke="none" /></Svg></NameBox>
        <NameDots />
        <EditButtons>
          <IconButton aria-label="キャンセル"><Svg width="11" height="10" viewBox="0 0 11 10" strokeWidth="1.800"><path d="m.5.5 10 9M10.500.5l-10 9" /></Svg></IconButton>
          <IconButton aria-label="入力"><Svg width="14" height="11" viewBox="0 0 14 11" strokeWidth="2.200"><path d="m1 6 4 3.500L13 1" /></Svg></IconButton>
          <IconButton aria-label="関数の挿入">{I.fx}</IconButton>
        </EditButtons>
        <FormulaField>
          <input aria-label="数式" value={formula} onChange={e => setFormula(e.target.value)} />
          <Svg width="8" height="6" viewBox="0 0 8 6" strokeWidth="2"><path d="m.7 1 3.300 3.300L7.300 1" /></Svg>
        </FormulaField>
      </FormulaBar>

      <SheetArea>
        <GridBox>
          <Table>
            <colgroup>
              <col style={{ width: 29 }} />
              {COLS.map(([c, w]) => <col key={c} style={{ width: w }} />)}
              <col />
            </colgroup>
            <thead>
              <tr>
                <Corner aria-label="すべて選択"><Svg width="17" height="17" viewBox="0 0 17 17"><path d="M17 0v17H0z" fill="#b4b4b4" stroke="none" /></Svg></Corner>
                {COLS.map(([c]) => <ColHead key={c} $on={c === 'J'}>{c}</ColHead>)}
                <ColHead />
              </tr>
            </thead>
            <tbody>
              {ROWS.map(r => (
                <tr key={r}>
                  <RowHead $on={r === 10}>{r}</RowHead>
                  {COLS.map(([c]) => {
                    const d = cells[c + r];
                    return <Cell key={c} $kind={d?.k ?? 'empty'} $open={OPEN.has(c + r)}>{d?.v}</Cell>;
                  })}
                  <Cell $kind="empty" />
                </tr>
              ))}
            </tbody>
          </Table>
          <Range $x={99} $y={74} $w={75} $h={352} $color="#c0343f" $fill="rgba(192,52,63,.1)"><Handles /></Range>
          <Range $x={243} $y={74} $w={139} $h={352} $color="#3369c4" $fill="rgba(51,105,196,.11)"><Handles /></Range>
          <Range $x={710} $y={249} $w={74} $h={27} $color="#8058b8" $fill="rgba(128,88,184,.1)"><Handles /></Range>
          <Editor>
            =MINIFS(<Ref $c="#3f6fc8">$D$3:$D$16</Ref>,<Ref $c="#bf4450">$B$3:$B$16</Ref>,<Ref $c="#8a60c0">I10</Ref>)<Caret />
          </Editor>
          <Step>5</Step>
        </GridBox>
        <VScroll>
          <ScrollButton aria-label="上へ"><Tri dir="up" /></ScrollButton>
          <VThumb /><VRest />
          <ScrollButton aria-label="下へ"><Tri dir="down" /></ScrollButton>
        </VScroll>
      </SheetArea>

      <TabBar>
        <SheetNav><Tri dir="left" /><Tri dir="right" /></SheetNav>
        <SheetTab>Sheet1</SheetTab>
        <AddSheet aria-label="新しいシート"><Svg width="17" height="17" viewBox="0 0 17 17" strokeWidth="1.200"><circle cx="8.500" cy="8.500" r="7.500" /><path d="M4.500 8.500h8M8.500 4.500v8" strokeWidth="2" /></Svg></AddSheet>
        <HScroll>
          <ScrollDots />
          <ScrollButton aria-label="左へ"><Tri dir="left" /></ScrollButton>
          <HTrack><HThumb /><HRest /></HTrack>
          <ScrollButton aria-label="右へ"><Tri dir="right" /></ScrollButton>
        </HScroll>
      </TabBar>
      <StatusBar>
        <span>入力</span>
        <MacroButton aria-label="マクロの記録"><Svg width="14" height="13" viewBox="0 0 14 13"><path d="M1.500 5v7.500h11V1.500H6" /><path d="M6 1h7v3H6z" fill="currentColor" stroke="none" /><circle cx="3.500" cy="3" r="3" fill="currentColor" stroke="none" /><path d="M3 6.500h8M3 8.500h8M3 10.500h8" strokeDasharray="2 1" /></Svg></MacroButton>
        <ViewTools>
          <IconButton $w={38} $h={20} aria-label="標準"><Svg width="13" height="13" viewBox="0 0 13 13"><path d="M.5.5h12v12H.5zM4.500.5v12M8.500.5v12M.5 4.500h12M.5 8.500h12" /></Svg></IconButton>
          <IconButton $w={38} $h={20} aria-label="ページ レイアウト"><Svg width="14" height="13" viewBox="0 0 14 13"><path d="M.5.5h13v12H.5zM3.500 2.500h7v8h-7zM5 4.500h4M5 6.500h4M5 8.500h4" /></Svg></IconButton>
          <IconButton $w={38} $h={20} aria-label="改ページ"><Svg width="14" height="13" viewBox="0 0 14 13"><path d="M.5.5h13v12H.5zM4.500.5v7M.5 7.500h8V.5" /></Svg></IconButton>
          <IconButton $w={16} $h={20} aria-label="縮小"><Svg width="6" height="2" viewBox="0 0 6 2" strokeWidth="2"><path d="M0 1h6" /></Svg></IconButton>
          <ZoomRange type="range" aria-label="ズーム" value={zoom} onChange={e => setZoom(+e.target.value)} />
          <IconButton $w={8} $h={20} aria-label="拡大"><Svg width="8" height="8" viewBox="0 0 8 8" strokeWidth="2"><path d="M0 4h8M4 0v8" /></Svg></IconButton>
          <ZoomText>100%</ZoomText>
        </ViewTools>
      </StatusBar>
    </Window>
  );
}
